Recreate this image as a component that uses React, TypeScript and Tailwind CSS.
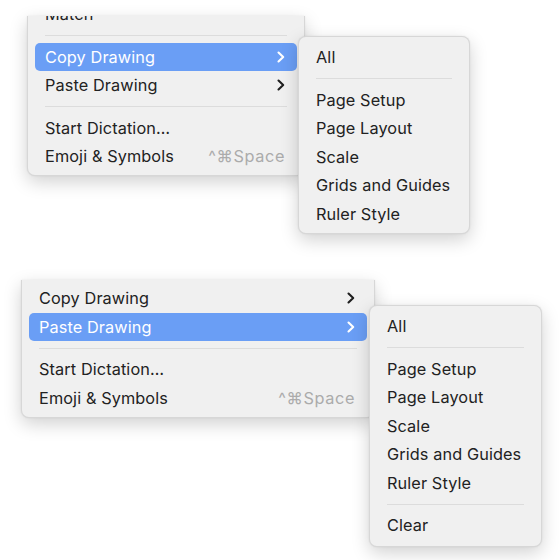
import React from "react";

const font = { fontFamily: "Inter, 'Noto Sans', 'DejaVu Sans', sans-serif" };

function Chevron({ white }: { white?: boolean }) {
  return (
    <svg width="8" height="12" viewBox="0 0 8 12" className="shrink-0">
      <polyline
        points="1.5,1.5 6.2,6 1.5,10.5"
        fill="none"
        stroke={white ? "#ffffff" : "#1f1f1f"}
        strokeWidth="2.1"
        strokeLinecap="round"
        strokeLinejoin="round"
      />
    </svg>
  );
}

function Row({
  label,
  active,
  sub,
  shortcut,
}: {
  label: string;
  active?: boolean;
  sub?: boolean;
  shortcut?: string;
}) {
  return (
    <div className="px-[7px]">
      <div
        className={
          "flex h-[28.5px] items-center justify-between gap-2 rounded-[5px] pl-[10px] pr-[12px] " +
          (active ? "bg-[#6a9ef5] text-white" : "text-[#222222]")
        }
      >
        <span className="whitespace-nowrap text-[16.3px] leading-none tracking-[0.1px]">
          {label}
        </span>
        {sub && <Chevron white={active} />}
        {shortcut && (
          <span className="whitespace-nowrap text-[16.3px] leading-none tracking-[0.6px] text-[#ababab]">
            {shortcut}
          </span>
        )}
      </div>
    </div>
  );
}

function Sep() {
  return (
    <div className="flex h-[14px] items-center px-[17px]">
      <div className="h-px w-full bg-[#dcdcdc]" />
    </div>
  );
}

const menuBox =
  "bg-[#f0f0f0] border border-black/10 shadow-[0_6px_18px_rgba(0,0,0,0.18),0_0_2px_rgba(0,0,0,0.08)]";

export default function App() {
  return (
    <div className="flex h-[560px] w-[560px] flex-col overflow-hidden bg-white" style={font}>
      {/* Top section */}
      <div className="flex h-[280px] items-start overflow-hidden">
        <div
          className={
            "relative z-0 ml-[27px] mt-[16px] h-[160px] w-[278px] shrink-0 overflow-hidden rounded-b-[8px] border-t-0 " +
            menuBox
          }
        >
          <div className="-mt-[16px]">
            <Row label="Match" />
            <Sep />
            <Row label="Copy Drawing" active sub />
            <Row label="Paste Drawing" sub />
            <Sep />
            <Row label="Start Dictation…" />
            <Row label="Emoji & Symbols" shortcut="^⌘Space" />
          </div>
        </div>
        <div
          className={
            "relative z-10 -ml-[7px] mt-[36px] w-[172px] shrink-0 rounded-[8px] pt-[6px] pb-[5px] " +
            menuBox
          }
        >
          <Row label="All" />
          <Sep />
          <Row label="Page Setup" />
          <Row label="Page Layout" />
          <Row label="Scale" />
          <Row label="Grids and Guides" />
          <Row label="Ruler Style" />
        </div>
      </div>

      {/* Bottom section */}
      <div className="flex items-start">
        <div
          className={
            "relative z-0 ml-[21px] w-[354px] shrink-0 overflow-hidden rounded-b-[8px] border-t-0 pt-[4px] pb-[5px] " +
            menuBox
          }
        >
          <Row label="Copy Drawing" sub />
          <Row label="Paste Drawing" active sub />
          <Sep />
          <Row label="Start Dictation…" />
          <Row label="Emoji & Symbols" shortcut="^⌘Space" />
        </div>
        <div
          className={
            "relative z-10 -ml-[6px] mt-[25px] w-[173px] shrink-0 rounded-[8px] pt-[6px] pb-[6px] " +
            menuBox
          }
        >
          <Row label="All" />
          <Sep />
          <Row label="Page Setup" />
          <Row label="Page Layout" />
          <Row label="Scale" />
          <Row label="Grids and Guides" />
          <Row label="Ruler Style" />
          <Sep />
          <Row label="Clear" />
        </div>
      </div>
    </div>
  );
}
